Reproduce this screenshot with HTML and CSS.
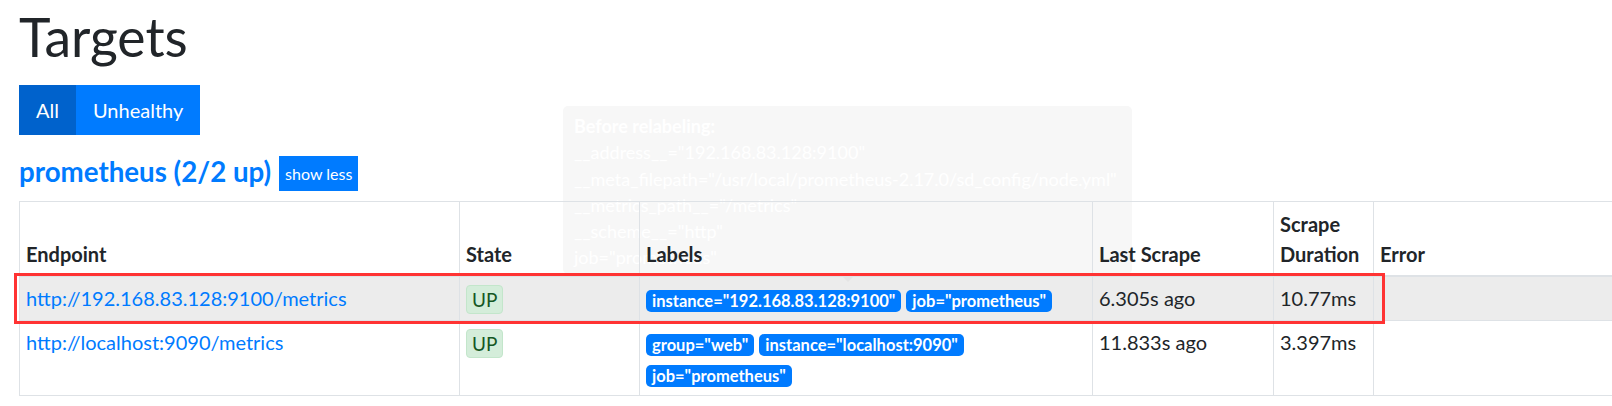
FILE: index.html
```html
<!DOCTYPE html>
<html lang="en">
<head>
<meta charset="utf-8">
<title>Targets</title>
<link rel="stylesheet" href="styles.css">
</head>
<body>
<div class="page">
  <h1 class="title">Targets</h1>
  <div class="btn-group">
    <button class="btn active">All</button><button class="btn">Unhealthy</button>
  </div>
  <div class="pool-header">
    <a class="pool-title">prometheus (2/2 up)</a>
    <button class="btn-sm">show less</button>
  </div>
  <div class="table-wrap">
    <table class="targets">
      <colgroup>
        <col class="c-endpoint"><col class="c-state"><col class="c-labels"><col class="c-last"><col class="c-dur"><col class="c-err">
      </colgroup>
      <thead>
        <tr><th>Endpoint</th><th>State</th><th>Labels</th><th>Last Scrape</th><th>Scrape Duration</th><th>Error</th></tr>
      </thead>
      <tbody>
        <tr class="hover">
          <td><a class="link">http://192.168.83.128:9100/metrics</a></td>
          <td><span class="state">UP</span></td>
          <td><div class="labels"><span class="badge">instance="192.168.83.128:9100"</span><span class="badge">job="prometheus"</span></div></td>
          <td>6.305s ago</td>
          <td>10.77ms</td>
          <td></td>
        </tr>
        <tr>
          <td><a class="link">http://localhost:9090/metrics</a></td>
          <td><span class="state">UP</span></td>
          <td><div class="labels"><span class="badge">group="web"</span><span class="badge">instance="localhost:9090"</span><span class="badge">job="prometheus"</span></div></td>
          <td>11.833s ago</td>
          <td>3.397ms</td>
          <td></td>
        </tr>
      </tbody>
    </table>
  </div>
</div>
<div class="tooltip">
  <div class="tt-head">Before relabeling:</div>
  <div>__address__="192.168.83.128:9100"</div>
  <div>__meta_filepath="/usr/local/prometheus-2.17.0/sd_config/node.yml"</div>
  <div>__metrics_path__="/metrics"</div>
  <div>__scheme__="http"</div>
  <div>job="prometheus"</div>
</div>
<div class="highlight"></div>
</body>
</html>
```

FILE: styles.css
```css
html, body {
  margin: 0;
  padding: 0;
  overflow: hidden;
  background: #fff;
}
body {
  position: relative;
  width: 1612px;
  height: 406px;
  font-family: Lato, "Open Sans", sans-serif;
  font-size: 20px;
  line-height: 30px;
  color: #212529;
}
.page {
  padding: 0 19px;
}
.title {
  font-size: 53.5px;
  font-weight: 400;
  line-height: 62px;
  margin: 5px 0 18px;
}
.btn-group {
  display: flex;
}
.btn {
  font: inherit;
  border: 0;
  color: #fff;
  background: #007bff;
  height: 50px;
  padding: 0 17px;
  line-height: 50px;
}
.btn.active {
  background: #0062cc;
}
.pool-header {
  display: flex;
  align-items: center;
  gap: 8px;
  margin-top: 21px;
  height: 35px;
}
.pool-title {
  font-size: 27.7px;
  font-weight: 700;
  line-height: 35px;
  margin-top: -4px;
  color: #007bff;
}
.btn-sm {
  font: inherit;
  font-size: 16px;
  border: 0;
  background: #007bff;
  color: #fff;
  height: 35px;
  padding: 0 6px;
}
.table-wrap {
  position: relative;
  z-index: 1;
  margin-top: 10px;
}
.targets {
  border-collapse: collapse;
  table-layout: fixed;
  width: 1654px;
}
.c-endpoint { width: 440px; }
.c-state { width: 180px; }
.c-labels { width: 453px; }
.c-last { width: 181px; }
.c-dur { width: 100px; }
.c-err { width: 300px; }
.targets th,
.targets td {
  border: 1px solid #dee2e6;
  padding: 6px;
  text-align: left;
  vertical-align: top;
}
.targets th {
  vertical-align: bottom;
  border-bottom-width: 2px;
  font-weight: 700;
  padding-top: 7px;
}
.targets tr.hover td {
  background: rgba(0, 0, 0, 0.075);
}
.link {
  color: #007bff;
  text-decoration: none;
}
.state {
  display: inline-block;
  vertical-align: top;
  box-sizing: border-box;
  height: 29px;
  margin: 2px 0 -2px;
  padding: 0 5px;
  line-height: 27px;
  font-size: 19px;
  color: #155724;
  background: #d4edda;
  border: 1px solid #c3e6cb;
  border-radius: 4px;
}
.labels {
  display: flex;
  flex-wrap: wrap;
  row-gap: 9px;
  column-gap: 5px;
  padding: 7px 0 2px;
}
.badge {
  display: block;
  height: 22px;
  box-sizing: border-box;
  font-size: 16.5px;
  font-weight: 700;
  line-height: 16px;
  padding: 3px 6px;
  color: #fff;
  background: #007bff;
  border-radius: 5px;
  white-space: nowrap;
}
.tooltip {
  position: absolute;
  z-index: 0;
  left: 563px;
  top: 106px;
  width: 569px;
  height: 168px;
  box-sizing: border-box;
  padding: 7px 11px 5px;
  background: #f7f7f7;
  color: #fff;
  font-size: 18px;
  line-height: 26.25px;
  border-radius: 5px;
}
.tooltip::after {
  content: "";
  position: absolute;
  left: 50%;
  bottom: -8px;
  margin-left: -8px;
  border-left: 8px solid transparent;
  border-right: 8px solid transparent;
  border-top: 8px solid #f7f7f7;
}
.tt-head {
  font-weight: 700;
}
.highlight {
  position: absolute;
  z-index: 2;
  left: 14px;
  top: 273px;
  width: 1371px;
  height: 51px;
  box-sizing: border-box;
  border: 3px solid #f33;
}
```
